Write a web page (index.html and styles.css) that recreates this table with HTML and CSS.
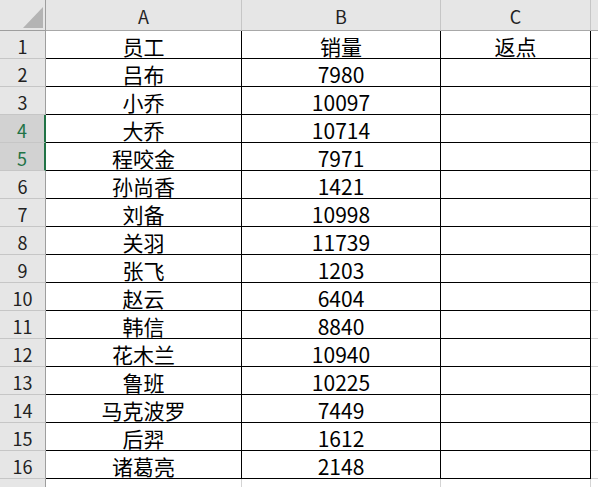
FILE: index.html
```html
<!DOCTYPE html>
<html lang="zh">
<head>
<meta charset="utf-8">
<title>Sheet</title>
<link rel="stylesheet" href="styles.css">
</head>
<body>
<div class="sheet">
  <div class="c corner"><span class="tri"></span></div>
  <div class="c ch">A</div>
  <div class="c ch">B</div>
  <div class="c ch">C</div>
  <div class="c ch chx"></div>

  <div class="c rh">1</div><div class="c d">员工</div><div class="c d">销量</div><div class="c d">返点</div><div class="c x"></div>
  <div class="c rh">2</div><div class="c d">吕布</div><div class="c d">7980</div><div class="c d"></div><div class="c x"></div>
  <div class="c rh">3</div><div class="c d">小乔</div><div class="c d">10097</div><div class="c d"></div><div class="c x"></div>
  <div class="c rh sel">4</div><div class="c d">大乔</div><div class="c d">10714</div><div class="c d"></div><div class="c x"></div>
  <div class="c rh sel">5</div><div class="c d">程咬金</div><div class="c d">7971</div><div class="c d"></div><div class="c x"></div>
  <div class="c rh">6</div><div class="c d">孙尚香</div><div class="c d">1421</div><div class="c d"></div><div class="c x"></div>
  <div class="c rh">7</div><div class="c d">刘备</div><div class="c d">10998</div><div class="c d"></div><div class="c x"></div>
  <div class="c rh">8</div><div class="c d">关羽</div><div class="c d">11739</div><div class="c d"></div><div class="c x"></div>
  <div class="c rh">9</div><div class="c d">张飞</div><div class="c d">1203</div><div class="c d"></div><div class="c x"></div>
  <div class="c rh">10</div><div class="c d">赵云</div><div class="c d">6404</div><div class="c d"></div><div class="c x"></div>
  <div class="c rh">11</div><div class="c d">韩信</div><div class="c d">8840</div><div class="c d"></div><div class="c x"></div>
  <div class="c rh">12</div><div class="c d">花木兰</div><div class="c d">10940</div><div class="c d"></div><div class="c x"></div>
  <div class="c rh">13</div><div class="c d">鲁班</div><div class="c d">10225</div><div class="c d"></div><div class="c x"></div>
  <div class="c rh">14</div><div class="c d">马克波罗</div><div class="c d">7449</div><div class="c d"></div><div class="c x"></div>
  <div class="c rh">15</div><div class="c d">后羿</div><div class="c d">1612</div><div class="c d"></div><div class="c x"></div>
  <div class="c rh">16</div><div class="c d">诸葛亮</div><div class="c d">2148</div><div class="c d"></div><div class="c x"></div>

  <div class="c rh last"></div><div class="c e"></div><div class="c e"></div><div class="c e"></div><div class="c x last"></div>
</div>
</body>
</html>
```

FILE: styles.css
```css
html, body {
  margin: 0;
  padding: 0;
  background: #ffffff;
  overflow: hidden;
}

.sheet {
  display: grid;
  grid-template-columns: 46px 196px 199px 150px 1fr;
  grid-template-rows: 31px repeat(16, 28px) 1fr;
  width: 598px;
  height: 487px;
  font-family: "Noto Sans CJK SC", "Noto Sans", sans-serif;
  color: #000000;
}

.c {
  box-sizing: border-box;
  display: flex;
  align-items: center;
  justify-content: center;
  border-right: 1px solid transparent;
  border-bottom: 1px solid transparent;
  white-space: nowrap;
}

.corner {
  background: #e6e6e6;
  border-right-color: #9e9e9e;
  border-bottom-color: #9e9e9e;
  justify-content: flex-end;
  align-items: flex-end;
  padding: 0 2px 2px 0;
}

.tri {
  display: block;
  width: 20px;
  height: 21px;
  background: #b4b4b4;
  clip-path: polygon(100% 0, 100% 100%, 0 100%);
}

.ch {
  background: #e6e6e6;
  border-right-color: #c6c6c6;
  border-bottom-color: #a8a8a8;
  font-size: 18px;
  line-height: 28px;
  color: #222222;
  padding-top: 2px;
}

.chx {
  border-right: none;
}

.rh {
  background: #e6e6e6;
  border-right-color: #9e9e9e;
  border-bottom-color: #c6c6c6;
  font-size: 18px;
  line-height: 23px;
  color: #222222;
  padding-top: 4px;
}

.rh.sel {
  background: #d2d2d2;
  color: #217346;
  border-right: 2px solid #217346;
}

.rh.last {
  border-bottom: none;
}

.d {
  border-right-color: #000000;
  border-bottom-color: #000000;
  font-size: 21px;
  line-height: 23px;
  padding-top: 4px;
}

.x {
  border-right: none;
  border-bottom-color: #d4d4d4;
}

.x.last {
  border-bottom: none;
}

.e {
  border-right-color: #d4d4d4;
  border-bottom: none;
}
```
